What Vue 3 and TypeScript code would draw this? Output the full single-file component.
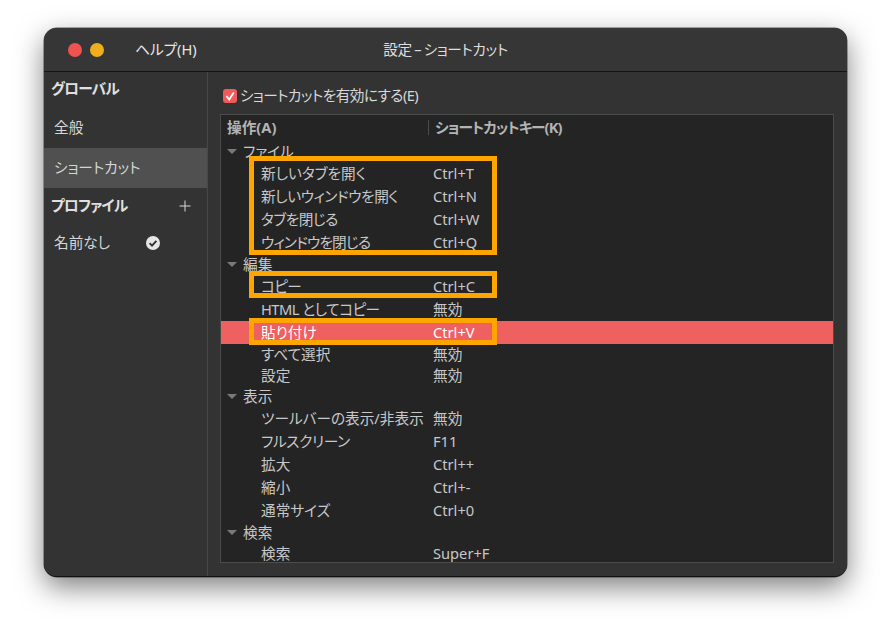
<template>
  <div class="page">
    <div class="window">
      <div class="titlebar">
        <div class="lights">
          <span class="light red"></span>
          <span class="light yellow"></span>
        </div>
        <span class="menu">ヘルプ(H)</span>
        <span class="title">設定 – ショートカット</span>
      </div>
      <div class="body">
        <aside class="sidebar">
          <div class="side-head first">グローバル</div>
          <div class="side-item">全般</div>
          <div class="side-item active">ショートカット</div>
          <div class="side-head profile">
            <span>プロファイル</span>
            <svg class="plus" width="12" height="12" viewBox="0 0 12 12">
              <path d="M6 .5v11M.5 6h11" stroke="#d8d8d8" stroke-width="1" fill="none" />
            </svg>
          </div>
          <div class="side-item unnamed">
            <span>名前なし</span>
            <svg class="check" width="14" height="14" viewBox="0 0 14 14">
              <circle cx="7" cy="7" r="7" fill="#e6e6e6" />
              <path d="M3.6 7.2l2.4 2.4 4.4-4.8" stroke="#333" stroke-width="1.9" fill="none" />
            </svg>
          </div>
        </aside>
        <main class="content">
          <label class="enable">
            <span class="box">
              <svg width="14" height="14" viewBox="0 0 14 14">
                <path d="M3.4 7.2l2.8 3.2L10.8 3.4" stroke="#fff" stroke-width="1.8" fill="none" />
              </svg>
            </span>
            <span class="enable-text">ショートカットを有効にする(E)</span>
          </label>
          <div class="tree">
            <div class="head">
              <span class="col-a">操作(A)</span>
              <span class="col-k">ショートカットキー(K)</span>
            </div>
            <div
              v-for="row in rows"
              :key="row.id"
              class="row"
              :class="{ selected: row.selected }"
              :style="{ height: row.h + 'px' }"
            >
              <template v-if="row.group">
                <span class="arrow"></span>
                <span class="group-name">{{ row.name }}</span>
              </template>
              <template v-else>
                <span class="name" :style="{ letterSpacing: (row.tight ?? 0) + 'px' }">{{ row.name }}</span>
                <span class="key">{{ row.key }}</span>
              </template>
            </div>
            <div class="mark mark-file"></div>
            <div class="mark mark-copy"></div>
            <div class="mark mark-paste"></div>
          </div>
        </main>
      </div>
    </div>
  </div>
</template>

<script setup lang="ts">
interface Row {
  id: number
  name: string
  key?: string
  group?: boolean
  selected?: boolean
  tight?: number
  h: number
}

// tight: letter spacing for the kana-heavy labels that ran wide
const rows: Row[] = [
  { id: 1, name: 'ファイル', group: true, h: 21 },
  { id: 2, name: '新しいタブを開く', key: 'Ctrl+T', h: 23 },
  { id: 3, name: '新しいウィンドウを開く', key: 'Ctrl+N', tight: -0.4, h: 23 },
  { id: 4, name: 'タブを閉じる', key: 'Ctrl+W', tight: -0.5, h: 23 },
  { id: 5, name: 'ウィンドウを閉じる', key: 'Ctrl+Q', tight: -0.8, h: 23 },
  { id: 6, name: '編集', group: true, h: 21 },
  { id: 7, name: 'コピー', key: 'Ctrl+C', tight: -0.6, h: 23 },
  { id: 8, name: 'HTML としてコピー', key: '無効', tight: -0.5, h: 23 },
  { id: 9, name: '貼り付け', key: 'Ctrl+V', selected: true, h: 23 },
  { id: 10, name: 'すべて選択', key: '無効', h: 21 },
  { id: 11, name: '設定', key: '無効', h: 21 },
  { id: 12, name: '表示', group: true, h: 21 },
  { id: 13, name: 'ツールバーの表示/非表示', key: '無効', h: 23 },
  { id: 14, name: 'フルスクリーン', key: 'F11', tight: -0.3, h: 23 },
  { id: 15, name: '拡大', key: 'Ctrl++', h: 23 },
  { id: 16, name: '縮小', key: 'Ctrl+-', h: 23 },
  { id: 17, name: '通常サイズ', key: 'Ctrl+0', h: 23 },
  { id: 18, name: '検索', group: true, h: 21 },
  { id: 19, name: '検索', key: 'Super+F', h: 22 },
]
</script>

<style>
html,
body {
  margin: 0;
  background: #fff;
}
</style>

<style scoped>
.page {
  width: 891px;
  height: 637px;
  box-sizing: border-box;
  padding: 28px 44px 60px;
  overflow: hidden;
  font-family: 'Noto Sans', 'Noto Sans CJK JP', sans-serif;
  font-size: 14.67px;
  line-height: 16px;
  font-feature-settings: 'palt';
  color: #dcdcdc;
}

.window {
  width: 803px;
  height: 549px;
  display: flex;
  flex-direction: column;
  overflow: hidden;
  border-radius: 13px;
  background: #333;
  box-shadow: 0 0 0 0.5px rgba(0, 0, 0, 0.6), 0 10px 28px rgba(0, 0, 0, 0.5);
  border-bottom: 1px solid #111;
  box-sizing: border-box;
}

.titlebar {
  position: relative;
  height: 44px;
  box-sizing: border-box;
  flex: none;
  display: flex;
  align-items: center;
  background: #363636;
  border-bottom: 1px solid #141414;
}

.lights {
  display: flex;
  gap: 8px;
  margin-left: 24px;
}

.light {
  width: 14px;
  height: 14px;
  border-radius: 50%;
}

.red {
  background: #ef5350;
}

.yellow {
  background: #f0ad1c;
}

.menu {
  margin-left: 31px;
  padding-bottom: 2px;
  color: #e6e6e6;
}

.title {
  position: absolute;
  left: 0;
  right: 0;
  padding-bottom: 2px;
  text-align: center;
  word-spacing: -1px;
  letter-spacing: -0.35px;
  color: #dedede;
}

.body {
  flex: 1;
  display: flex;
  min-height: 0;
}

.sidebar {
  width: 164px;
  flex: none;
  box-sizing: border-box;
  border-right: 1px solid #484848;
  background: #333;
}

.side-head {
  display: flex;
  align-items: center;
  justify-content: space-between;
  box-sizing: border-box;
  padding: 0 16px 0 7px;
  font-weight: 700;
  letter-spacing: -0.7px;
  color: #e0e0e0;
}

.first {
  height: 36px;
  padding-bottom: 4px;
}

.profile {
  height: 35px;
  padding-bottom: 2px;
}

.side-item {
  height: 40px;
  box-sizing: border-box;
  display: flex;
  align-items: center;
  padding: 0 0 3px 10px;
  color: #d6d6d6;
}

.active {
  background: #505050;
}

.unnamed {
  height: 42px;
  justify-content: space-between;
  padding-right: 47px;
  padding-bottom: 4px;
}

.check {
  margin-top: 2px;
}

.plus {
  margin-top: 2px;
}

.content {
  flex: 1;
  min-width: 0;
  padding: 14px 13px 13px 12px;
  display: flex;
  flex-direction: column;
  background: #333;
}

.enable {
  height: 20px;
  margin-left: 3px;
  margin-bottom: 8px;
  display: flex;
  align-items: center;
  gap: 3px;
  color: #d8d8d8;
}

.enable-text {
  padding-bottom: 3px;
  letter-spacing: -0.55px;
}

.box {
  width: 14px;
  height: 14px;
  border-radius: 3px;
  background: #ef5b5b;
  display: flex;
}

.tree {
  position: relative;
  flex: 1;
  min-height: 0;
  overflow: hidden;
  border: 1px solid #4c4c4c;
  background: #242424;
}

.head {
  height: 26px;
  box-sizing: border-box;
  padding-bottom: 2px;
  display: flex;
  align-items: center;
  font-weight: 700;
  color: #b4b4b4;
}

.col-a {
  width: 207px;
  padding-left: 6px;
  box-sizing: border-box;
}

.col-k {
  padding-left: 6px;
  border-left: 1px solid #4c4c4c;
  letter-spacing: -0.9px;
  line-height: 15px;
}

.row {
  box-sizing: border-box;
  padding-bottom: 2px;
  display: flex;
  align-items: center;
  color: #c8c8c8;
}

.arrow {
  width: 0;
  height: 0;
  margin-top: 2px;
  margin-left: 6px;
  border-left: 5px solid transparent;
  border-right: 5px solid transparent;
  border-top: 5px solid #7a7a7a;
}

.group-name {
  margin-left: 6px;
}

.name {
  width: 212px;
  flex: none;
  box-sizing: border-box;
  padding-left: 40px;
  white-space: nowrap;
}

.key {
  white-space: nowrap;
}

.selected {
  background: #ef6060;
  color: #fff;
}

.mark {
  position: absolute;
  left: 28px;
  width: 248px;
  box-sizing: border-box;
  border: 5px solid #ffa500;
}

.mark-file {
  top: 41px;
  height: 99px;
}

.mark-copy {
  top: 156px;
  height: 27px;
}

.mark-paste {
  top: 203px;
  height: 27px;
}
</style>
